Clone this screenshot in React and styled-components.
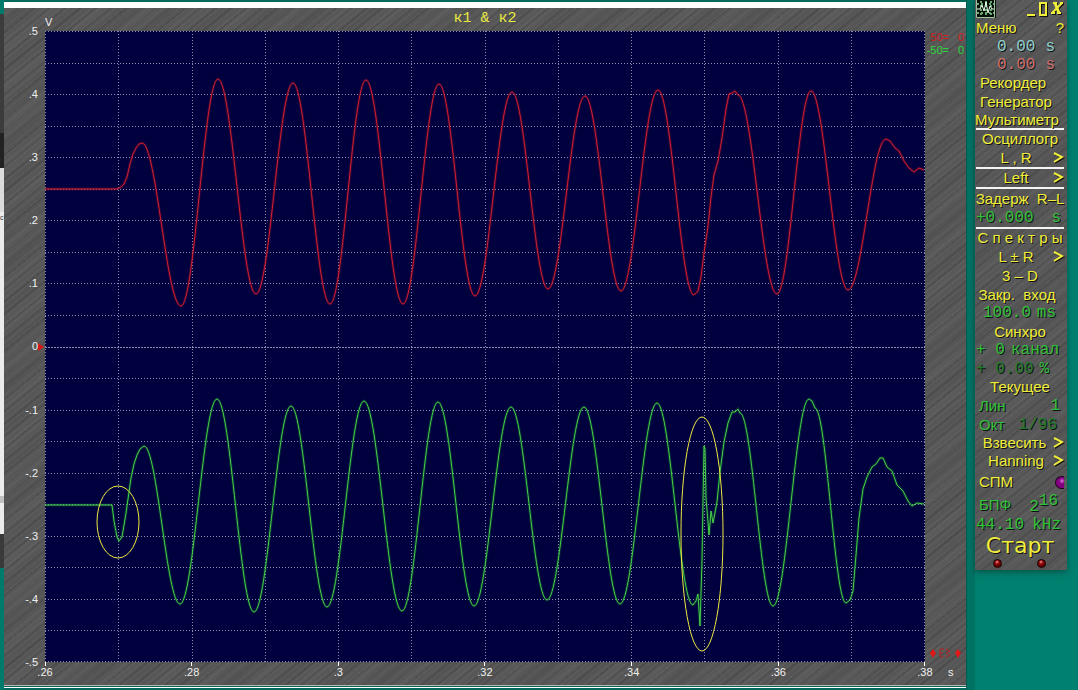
import React from 'react';
import { useState } from 'react';
import styled, { createGlobalStyle, css } from 'styled-components';

const GlobalStyle = createGlobalStyle`
  * {
    box-sizing: border-box;
  }
  body {
    margin: 0;
    background-color: #00806f;
    font-family: "Liberation Sans", Arial, sans-serif;
  }
`;

const metal = css`
  background-color: #5a5a5a;
  background-image:
    repeating-linear-gradient(141deg, rgba(0, 0, 0, 0.16) 0px, transparent 2px, transparent 8px, rgba(0, 0, 0, 0.1) 10px, transparent 12px, transparent 19px),
    repeating-linear-gradient(141deg, rgba(255, 255, 255, 0.05) 0px, transparent 2px, transparent 5px),
    repeating-linear-gradient(141deg, transparent 0px, rgba(0, 0, 0, 0.08) 17px, transparent 31px);
`;

const Desktop = styled.div`
  display: flex;
  align-items: stretch;
  height: 100vh;
  overflow: hidden;
  background-color: #00806f;
`;

const Edge = styled.div`
  display: flex;
  flex-direction: column;
  width: 4px;
`;

const EdgePart = styled.div`
  flex: ${(props) => props.$size} 0 0;
  min-height: 0;
  background-color: ${(props) => props.$color};
  color: #333333;
  font-size: 7px;
  line-height: 12px;
`;

const Scope = styled.main`
  display: flex;
  flex-direction: column;
  flex: 1;
  min-width: 0;
  padding: 2px 0;
  background-color: #04695c;
`;

const Caption = styled.div`
  height: 6px;
  background-color: #ffffff;
`;

const Board = styled.div`
  ${metal}
  flex: 1;
  min-height: 0;
  display: grid;
  grid-template-columns: 41px 1fr 41px;
  grid-template-rows: 23px 1fr 23px;
`;

const Bottom = styled.div`
  height: 3px;
  border-top: 1px solid #b8b8b8;
  border-bottom: 1px solid #ffffff;
`;

const Unit = styled.span`
  color: #f0f0f0;
  font-size: 11px;
  line-height: 12px;
  padding: ${(props) => props.$pad};
`;

const Title = styled.h1`
  margin: 0;
  color: #e8e840;
  font-family: "Liberation Mono", monospace;
  font-size: 15px;
  font-weight: 400;
  line-height: 22px;
  text-align: center;
`;

const YAxis = styled.div`
  display: flex;
  flex-direction: column;
  justify-content: space-between;
  margin: -7px 0;
  padding-right: 7px;
  text-align: right;
  color: #f0f0f0;
  font-size: 11px;
  line-height: 14px;
`;

const Zero = styled.span`
  position: relative;

  &::after {
    content: "";
    position: absolute;
    right: -6px;
    top: 4px;
    border-left: 6px solid #d81818;
    border-top: 4px solid transparent;
    border-bottom: 4px solid transparent;
  }
`;

const XAxis = styled.div`
  display: flex;
  justify-content: space-between;
  margin: 0 -15px;
  color: #f0f0f0;
  font-size: 11px;
  line-height: 12px;
`;

const XMark = styled.span`
  width: 30px;
  text-align: center;

  &::before {
    content: "";
    display: block;
    width: 1px;
    height: 4px;
    margin: 0 auto;
    background-color: #ffffff;
  }
`;

const Plot = styled.svg`
  display: block;
  width: 100%;
  height: 100%;
  min-height: 0;
  background-color: #00003f;

  path,
  line,
  ellipse {
    fill: none;
    vector-effect: non-scaling-stroke;
  }
`;

const Side = styled.div`
  display: flex;
  flex-direction: column;
  justify-content: space-between;
`;

const Levels = styled.div`
  font-size: 11px;
  line-height: 13px;
`;

const Level = styled.div`
  display: flex;
  justify-content: space-between;
  padding: 0 2px 0 1px;
  color: ${(props) => props.$color};

  span:first-child {
    min-width: 23px;
    text-align: right;
  }
`;

const Gap = styled.div`
  width: 9px;
  background-color: #007264;
  border-left: 1px solid #035b50;
`;

const Rest = styled.div`
  width: 11px;
`;

const Panel = styled.aside`
  ${metal}
  align-self: flex-start;
  width: 92px;
  padding: 0 3px 1px 1px;
  box-shadow: 0 2px 6px rgba(0, 50, 45, 0.6);
`;

const Row = styled.div`
  display: flex;
  align-items: center;
  justify-content: ${(props) => props.$justify || 'center'};
  height: ${(props) => props.$height || 18}px;
  padding: 0 ${(props) => props.$right || 0}px 0 ${(props) => props.$left || 0}px;
  border-bottom: ${(props) => (props.$line ? '2px solid #f4f4f4' : 'none')};
`;

const Button = styled.button`
  flex: ${(props) => (props.$wide ? '1' : 'none')};
  padding: 0;
  border: none;
  background: none;
  color: ${(props) => props.$color || '#f0ee3c'};
  font-family: "Liberation Sans", Arial, sans-serif;
  font-size: 15px;
  line-height: 18px;
  text-align: center;
  text-shadow: 1px 1px 0 #111111;
  white-space: pre;
  cursor: pointer;
`;

const Arrow = styled(Button)`
  width: 11px;
  display: flex;

  svg {
    filter: drop-shadow(1px 1px 0 #111111);
  }
`;

const Value = styled.span`
  color: ${(props) => props.$color};
  font-family: "Liberation Mono", monospace;
  font-size: 16px;
  line-height: 18px;
  text-shadow: 1px 1px 0 #111111;
  white-space: pre;
`;

const Power = styled.sup`
  font-size: 16px;
  line-height: 16px;
`;

const Start = styled(Button)`
  font-family: "DejaVu Sans", Verdana, sans-serif;
  font-size: 22px;
  line-height: 24px;
`;

const WindowButtons = styled.div`
  display: flex;
  gap: 3px;

  svg {
    display: block;
    filter: drop-shadow(1px 1px 0 #111111);
  }
`;

const Knob = styled.input`
  appearance: none;
  width: 9px;
  height: 13px;
  margin: 0;
  border: 1px solid #1c001c;
  border-right: none;
  border-radius: 7px 0 0 7px;
  background: radial-gradient(circle at 6px 4px, #e070e0 0px, #800080 3px);
`;

const Led = styled.span`
  width: 9px;
  height: 9px;
  border: 1px solid #160000;
  border-radius: 50%;
  background: radial-gradient(circle at 3px 2px, #ff9090 0px, #8a0808 2px, #600000 5px);
`;

const YELLOW = '#f0ee3c';
const GREEN = '#2fc03c';
const DIM = '#1f7a2a';

// S = half swing with flat ends, L = straight piece
const RED_TRACE = [
  ['L', 45, 189], ['L', 117, 189], ['L', 121, 187], ['L', 124, 184], ['L', 127, 177], ['L', 130, 164],
  ['L', 133, 154], ['L', 136, 148], ['L', 139, 144], ['L', 142, 143], ['S', 181, 306], ['S', 218, 79],
  ['S', 256, 294], ['S', 293, 83], ['S', 330, 304], ['S', 366, 80], ['S', 403, 304], ['S', 439, 84],
  ['S', 475, 296], ['S', 512, 92], ['S', 548, 289], ['S', 585, 96], ['S', 621, 291], ['S', 658, 90],
  ['S', 694, 295], ['L', 698, 291], ['L', 701, 277], ['L', 704, 253], ['L', 708, 226], ['L', 711, 197],
  ['L', 714, 175], ['L', 718, 161], ['L', 722, 138], ['L', 726, 109], ['L', 729, 94], ['L', 732, 93],
  ['L', 735, 91], ['L', 738, 95], ['S', 777, 294], ['S', 811, 91], ['S', 848, 290], ['S', 886, 139],
  ['L', 890, 141], ['L', 895, 148], ['L', 899, 151], ['L', 904, 161], ['L', 909, 168], ['L', 914, 172],
  ['L', 919, 168], ['L', 924, 170],
];

const GREEN_TRACE = [
  ['L', 45, 505], ['L', 112, 505], ['L', 114, 521], ['L', 117, 537], ['L', 119, 541], ['L', 122, 537],
  ['L', 126, 513], ['L', 131, 478], ['L', 134, 464], ['L', 137, 455], ['L', 140, 449], ['L', 144, 446],
  ['S', 180, 604], ['S', 217, 399], ['S', 254, 612], ['S', 291, 406], ['S', 327, 607], ['S', 364, 401],
  ['S', 402, 611], ['S', 438, 402], ['S', 474, 606], ['S', 511, 407], ['S', 547, 600], ['S', 584, 407],
  ['S', 620, 604], ['S', 657, 403], ['S', 693, 605], ['L', 696, 601], ['L', 698, 594], ['L', 700, 626],
  ['L', 702, 560], ['L', 704, 446], ['L', 705, 449], ['L', 706, 498], ['L', 708, 522], ['L', 709, 535],
  ['L', 711, 511], ['L', 713, 523], ['L', 717, 502], ['L', 720, 472], ['L', 724, 442], ['L', 728, 423],
  ['L', 732, 412], ['L', 735, 412], ['L', 738, 409], ['L', 740, 413], ['S', 773, 606], ['S', 809, 399],
  ['L', 812, 401], ['L', 815, 408], ['S', 846, 603], ['L', 850, 600], ['L', 853, 591], ['L', 856, 555],
  ['L', 859, 518], ['L', 863, 489], ['L', 867, 477], ['L', 872, 467], ['L', 876, 464], ['L', 880, 458],
  ['L', 883, 458], ['L', 887, 467], ['L', 892, 471], ['L', 897, 485], ['L', 903, 491], ['L', 908, 501],
  ['L', 912, 506], ['L', 917, 503], ['L', 924, 504],
];

const toPath = (points) => {
  let d = `M${points[0][1]} ${points[0][2]}`;
  for (let i = 1; i < points.length; i++) {
    const [, px, py] = points[i - 1];
    const [kind, x, y] = points[i];
    if (kind === 'S') {
      const k = (x - px) * 0.37;
      d += ` C${px + k} ${py} ${x - k} ${y} ${x} ${y}`;
    } else {
      d += ` L${x} ${y}`;
    }
  }
  return d;
};

const Y_LABELS = ['.5', '.4', '.3', '.2', '.1', '0', '-.1', '-.2', '-.3', '-.4', '-.5'];
const X_LABELS = ['.26', '.28', '.3', '.32', '.34', '.36', '.38'];
const COLUMNS = Array.from({ length: 13 }, (_, i) => Math.min(45 + Math.round(i * 73.25), 924) + 0.5);
const ROWS = Array.from({ length: 21 }, (_, i) => Math.min(31 + Math.round(i * 31.55), 661) + 0.5);

const Chart = () => (
  <Plot viewBox="45 31 880 631" preserveAspectRatio="none" role="img" aria-label="к1 & к2">
    {COLUMNS.map((x) => (
      <line key={x} x1={x} x2={x} y1="31" y2="662" stroke="#8c8cae" strokeDasharray="1 2" />
    ))}
    {ROWS.map((y, i) => (
      <line key={y} x1="45" x2="925" y1={y} y2={y} stroke="#8c8cae" strokeDasharray={i === 10 ? '2 1' : '1 2'} />
    ))}
    <path d={toPath(RED_TRACE)} stroke="#c01020" strokeWidth="3" opacity="0.25" />
    <path d={toPath(RED_TRACE)} stroke="#d02030" strokeWidth="1" />
    <path d={toPath(GREEN_TRACE)} stroke="#10a020" strokeWidth="3" opacity="0.25" />
    <path d={toPath(GREEN_TRACE)} stroke="#48d048" strokeWidth="1" />
    <ellipse cx="118" cy="522" rx="21" ry="36" stroke="#f0e840" />
    <ellipse cx="702" cy="534" rx="21" ry="117" stroke="#f0e840" />
  </Plot>
);

const ScopeIcon = () => (
  <svg width="20" height="18" viewBox="0 0 20 18" aria-hidden="true">
    <rect width="20" height="18" fill="#061006" />
    <path d="M0.5 0V17.5H18.5V0" fill="none" stroke="#9cc0a0" />
    <path d="M5 1V17M10 1V17M15 1V17M1 4H18M1 13H18" stroke="#6aa874" strokeWidth="2" strokeDasharray="2 2" />
    <path d="M1 9H4L6 5L8 11L10 2L12 13L14 6L16 9H18" fill="none" stroke="#e8ffe8" />
  </svg>
);

const MinIcon = () => (
  <svg width="10" height="16" viewBox="0 0 10 16" aria-hidden="true">
    <path d="M1 14H9" stroke={YELLOW} strokeWidth="2" />
  </svg>
);

const MaxIcon = () => (
  <svg width="8" height="16" viewBox="0 0 8 16" aria-hidden="true">
    <rect x="1" y="2" width="6" height="12" fill="none" stroke={YELLOW} strokeWidth="2" />
  </svg>
);

const CloseIcon = () => (
  <svg width="14" height="16" viewBox="0 0 14 16" aria-hidden="true">
    <path d="M5 2L9 12" fill="none" stroke={YELLOW} strokeWidth="3" />
    <path d="M2 12L12 2" fill="none" stroke={YELLOW} strokeWidth="2" />
    <path d="M3 2H7M10 2H13M1 12H5M7 12H11" stroke={YELLOW} strokeWidth="2" />
  </svg>
);

const More = ({ label }) => (
  <Arrow aria-label={label}>
    <svg width="11" height="14" viewBox="0 0 11 14" aria-hidden="true">
      <path d="M1 2L9 6L1 11" fill="none" stroke={YELLOW} strokeWidth="2" />
    </svg>
  </Arrow>
);

const ShiftMarks = () => (
  <svg width="38" height="16" viewBox="0 0 38 16" aria-hidden="true">
    <path d="M8 3L11 7L8 12L5 7ZM33 3L36 7L33 12L30 7Z" fill="#e01818" />
    <path d="M19 3H15V11H19M15 7H18M21 3L25 5L21 7L25 9L21 11" fill="none" stroke="#c01818" strokeDasharray="3 1" />
  </svg>
);

const App = () => {
  const [psd, setPsd] = useState(true);

  return (
    <Desktop>
      <GlobalStyle />
      <Edge>
        <EdgePart $size={14} $color="#007a6b" />
        <EdgePart $size={119} $color="#3c3c3c" />
        <EdgePart $size={35} $color="#222222" />
        <EdgePart $size={44} $color="#dcdcdc" />
        <EdgePart $size={284} $color="#ececec">c</EdgePart>
        <EdgePart $size={7} $color="#c0c0c0" />
        <EdgePart $size={31} $color="#ececec" />
        <EdgePart $size={34} $color="#3a3a3a" />
        <EdgePart $size={122} $color="#007a6b" />
      </Edge>
      <Scope>
        <Caption />
        <Board>
          <Unit $pad="8px 0 0 41px">V</Unit>
          <Title>к1 &amp; к2</Title>
          <span />
          <YAxis>
            {Y_LABELS.map((label) => (label === '0' ? <Zero key={label}>0</Zero> : <span key={label}>{label}</span>))}
          </YAxis>
          <Chart />
          <Side>
            <Levels>
              <Level $color="#d02020"><span>50=</span><span>0</span></Level>
              <Level $color="#28d838"><span>-50=</span><span>0</span></Level>
            </Levels>
            <ShiftMarks />
          </Side>
          <span />
          <XAxis>
            {X_LABELS.map((label) => <XMark key={label}>{label}</XMark>)}
          </XAxis>
          <Unit $pad="4px 0 0 23px">s</Unit>
        </Board>
        <Bottom />
      </Scope>
      <Gap />
      <Panel>
        <Row $justify="space-between">
          <ScopeIcon />
          <WindowButtons>
            <Button aria-label="_"><MinIcon /></Button>
            <Button aria-label="▯"><MaxIcon /></Button>
            <Button aria-label="X"><CloseIcon /></Button>
          </WindowButtons>
        </Row>
        <Row $height={20} $justify="space-between">
          <Button>Меню</Button>
          <Button>?</Button>
        </Row>
        <Row $justify="space-between" $left={21} $right={9}>
          <Value $color="#8fd0d0">0.00</Value>
          <Value $color="#8fd0d0">s</Value>
        </Row>
        <Row $justify="space-between" $left={21} $right={9}>
          <Value $color="#d07070">0.00</Value>
          <Value $color="#d07070">s</Value>
        </Row>
        <Row $right={14}><Button>Рекордер</Button></Row>
        <Row $height={19} $right={8}><Button>Генератор</Button></Row>
        <Row $height={19} $right={6} $line><Button>Мультиметр</Button></Row>
        <Row><Button>Осциллогр</Button></Row>
        <Row $height={21} $left={3} $line>
          <Button $wide>L , R</Button>
          <More label="L , R >" />
        </Row>
        <Row $height={20} $left={3} $line>
          <Button $wide>Left</Button>
          <More label="Left >" />
        </Row>
        <Row $height={20}><Button>Задерж  R–L</Button></Row>
        <Row $height={20} $line $justify="space-between" $right={3}>
          <Value $color={GREEN}>+0.000</Value>
          <Value $color={GREEN}>s</Value>
        </Row>
        <Row><Button>С п е к т р ы</Button></Row>
        <Row $height={19} $left={3}>
          <Button $wide>L ± R</Button>
          <More label="L ± R >" />
        </Row>
        <Row $height={19}><Button>3 – D</Button></Row>
        <Row $height={19} $right={6}><Button>Закр.  вход</Button></Row>
        <Row $justify="space-between" $left={7} $right={8}>
          <Value $color={GREEN}>100.0</Value>
          <Value $color={GREEN}>ms</Value>
        </Row>
        <Row $height={19}><Button>Синхро</Button></Row>
        <Row $justify="space-between" $right={5}>
          <Value $color={GREEN}>+ 0</Value>
          <Value $color={GREEN}>канал</Value>
        </Row>
        <Row $height={19} $justify="space-between" $right={15}>
          <Value $color={DIM}>+ 0.00</Value>
          <Value $color={GREEN}>%</Value>
        </Row>
        <Row><Button>Текущее</Button></Row>
        <Row $height={19} $justify="space-between" $left={3} $right={4}>
          <Button $color={GREEN}>Лин</Button>
          <Value $color={GREEN}>1</Value>
        </Row>
        <Row $height={19} $justify="space-between" $left={3} $right={7}>
          <Button $color={GREEN}>Окт</Button>
          <Value $color={DIM}>1/96</Value>
        </Row>
        <Row>
          <Button $wide>Взвесить</Button>
          <More label="Взвесить >" />
        </Row>
        <Row $left={3}>
          <Button $wide>Hanning</Button>
          <More label="Hanning >" />
        </Row>
        <Row $height={24} $justify="space-between" $left={3}>
          <Button as="label" htmlFor="psd">СПМ</Button>
          <Knob id="psd" type="checkbox" checked={psd} onChange={(e) => setPsd(e.target.checked)} />
        </Row>
        <Row $height={22} $justify="space-between" $left={3} $right={6}>
          <Button $color={GREEN}>БПФ</Button>
          <Value $color={GREEN}>2<Power>16</Power></Value>
        </Row>
        <Row $justify="space-between" $right={3}>
          <Value $color={GREEN}>44.10</Value>
          <Value $color={GREEN}>kHz</Value>
        </Row>
        <Row $height={24}><Start>Старт</Start></Row>
        <Row $height={11} $justify="space-between" $left={17} $right={18}>
          <Led />
          <Led />
        </Row>
      </Panel>
      <Rest />
    </Desktop>
  );
};

export default App;
